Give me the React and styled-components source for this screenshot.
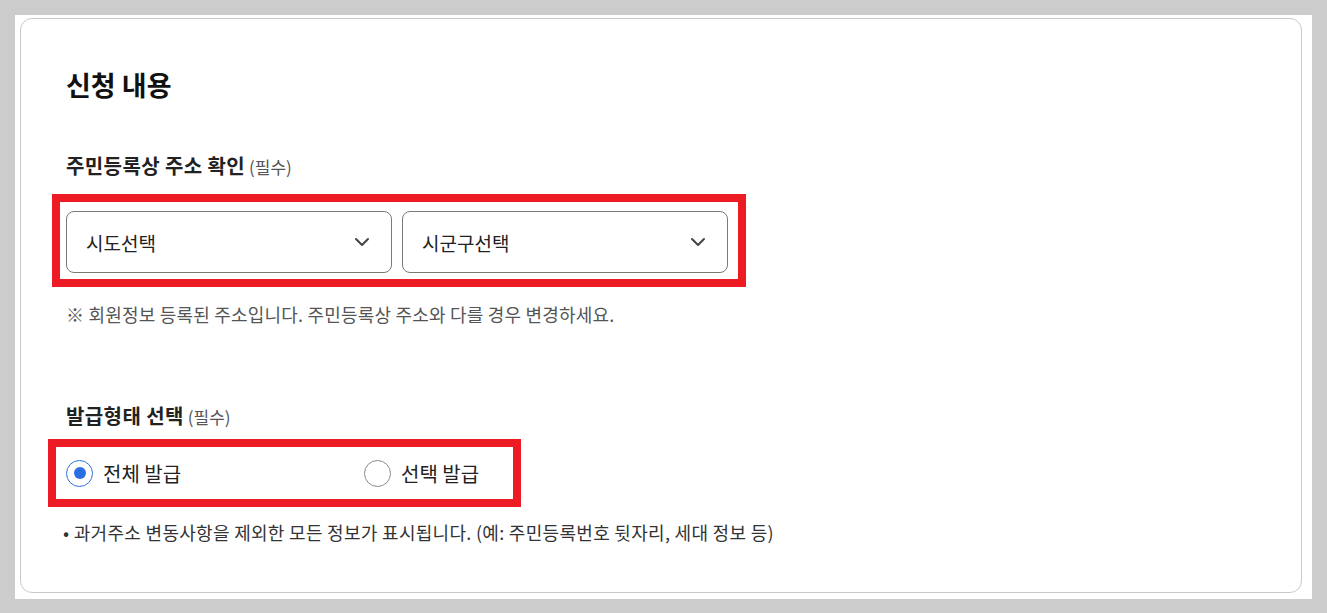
import React, { useState } from 'react'
import styled, { createGlobalStyle } from 'styled-components'
import { ChevronDown } from 'lucide-react'

const GlobalStyle = createGlobalStyle`
  body {
    margin: 0;
    background: #cccccc;
    font-family: 'Noto Sans CJK KR', 'Noto Sans', sans-serif;
    color: #222;
  }
`

const Page = styled.div`
  padding: 15px;
`

const Panel = styled.div`
  background: #ffffff;
  padding: 3px 10px 6px 5px;
`

const Card = styled.section`
  box-sizing: border-box;
  height: 575px;
  border: 1px solid #c9c9c9;
  border-radius: 12px;
  padding: 48px 45px 0;
`

const Title = styled.h2`
  margin: 0;
  font-size: 27px;
  line-height: 36px;
  font-weight: 700;
  color: #111;
`

const Label = styled.h3`
  margin: ${props => props.top}px 0 0;
  font-size: 20px;
  line-height: 28px;
  font-weight: 700;
  letter-spacing: 0.4px;
  color: #222;
`

const Required = styled.span`
  font-size: 17px;
  font-weight: 400;
  letter-spacing: 0;
  color: #555;
  margin-left: 4px;
`

const Highlight = styled.div`
  width: fit-content;
  border: 8px solid #ed1c24;
  margin: ${props => props.top}px 0 0 ${props => -props.inset}px;
  padding: ${props => props.pad};
`

const SelectRow = styled.div`
  display: flex;
  gap: 10px;
`

const SelectBox = styled.div`
  box-sizing: border-box;
  width: 326px;
  height: 62px;
  display: flex;
  align-items: center;
  justify-content: space-between;
  padding: 0 17px 0 19px;
  border: 1px solid #7a7a7a;
  border-radius: 8px;
  font-size: 19px;
  color: #222;
  cursor: pointer;
`

const Note = styled.p`
  margin: ${props => props.top}px 0 0 ${props => props.shift || 0}px;
  font-size: 18px;
  line-height: 26px;
  letter-spacing: ${props => props.spacing || 0}px;
  color: ${props => props.color || '#555'};
`

const RadioGroup = styled.div`
  display: flex;
  align-items: center;
  height: 52px;
`

const Option = styled.label`
  display: flex;
  align-items: center;
  gap: 10px;
  width: ${props => props.width || 'auto'};
  font-size: 20px;
  color: #222;
  cursor: pointer;
`

const Circle = styled.span`
  box-sizing: border-box;
  width: 27px;
  height: 27px;
  border-radius: 50%;
  border: 1.5px solid ${props => props.checked ? '#2b6fe3' : '#8a8a8a'};
  display: flex;
  align-items: center;
  justify-content: center;

  &::after {
    content: '';
    width: 12px;
    height: 12px;
    border-radius: 50%;
    background: #2b6fe3;
    display: ${props => props.checked ? 'block' : 'none'};
  }
`

function App() {
  const [type, setType] = useState('all')

  return (
    <Page>
      <GlobalStyle />
      <Panel>
        <Card>
          <Title>신청 내용</Title>

          <Label top={49}>
            주민등록상 주소 확인<Required>(필수)</Required>
          </Label>
          <Highlight top={13} inset={14} pad='9px 10px 6px 6px'>
            <SelectRow>
              <SelectBox>
                시도선택
                <ChevronDown size={24} strokeWidth={2} color='#444' />
              </SelectBox>
              <SelectBox>
                시군구선택
                <ChevronDown size={24} strokeWidth={2} color='#444' />
              </SelectBox>
            </SelectRow>
          </Highlight>
          <Note top={14} spacing={0.2}>※ 회원정보 등록된 주소입니다. 주민등록상 주소와 다를 경우 변경하세요.</Note>

          <Label top={75}>
            발급형태 선택<Required>(필수)</Required>
          </Label>
          <Highlight top={8} inset={18} pad='0 34px 0 10px'>
            <RadioGroup>
              <Option width='298px' onClick={() => setType('all')}>
                <Circle checked={type === 'all'} />
                전체 발급
              </Option>
              <Option onClick={() => setType('select')}>
                <Circle checked={type === 'select'} />
                선택 발급
              </Option>
            </RadioGroup>
          </Highlight>
          <Note top={12} shift={-3} spacing={0.3} color='#333'>• 과거주소 변동사항을 제외한 모든 정보가 표시됩니다. (예: 주민등록번호 뒷자리, 세대 정보 등)</Note>
        </Card>
      </Panel>
    </Page>
  )
}

export default App
